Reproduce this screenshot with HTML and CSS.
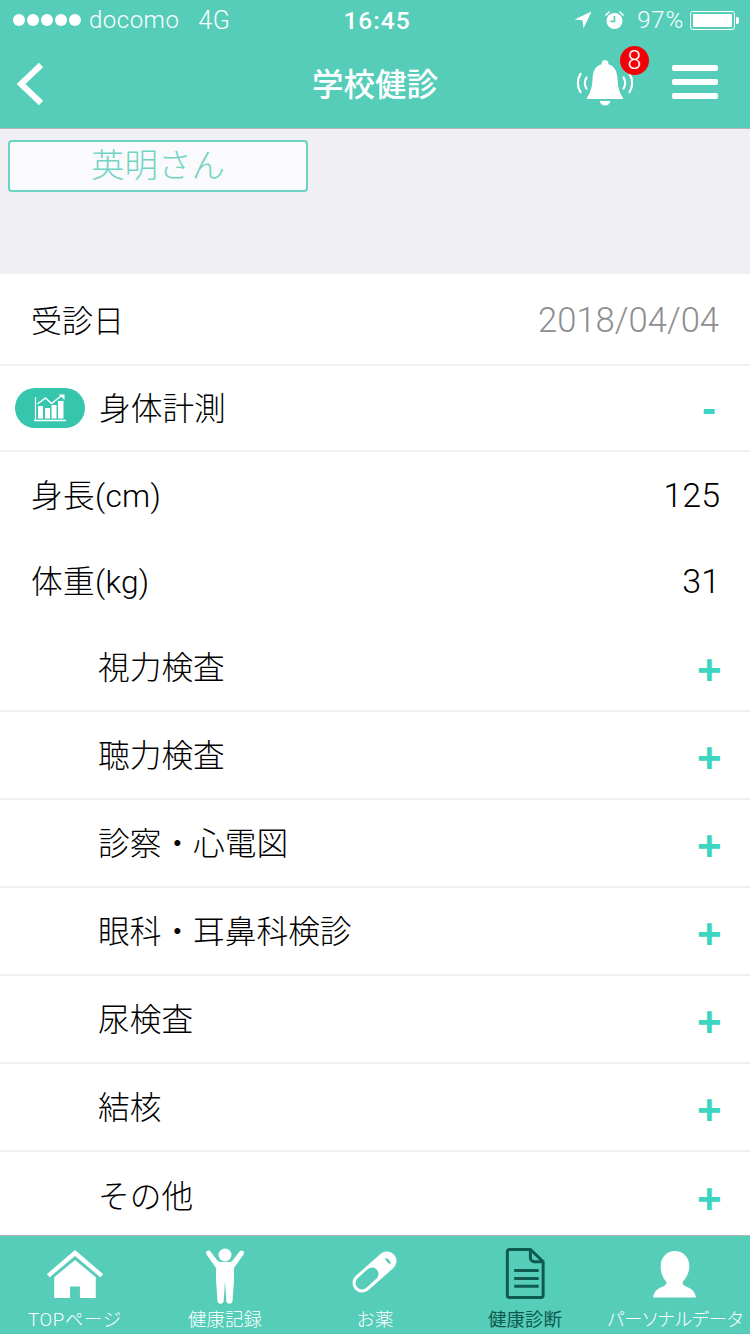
FILE: index.html
```html
<!DOCTYPE html>
<html lang="ja">
<head>
<meta charset="utf-8">
<title>学校健診</title>
<link rel="stylesheet" href="styles.css">
</head>
<body>
<div class="app">
  <header class="top">
    <div class="status">
      <div class="status-left">
        <div class="dots"><i></i><i></i><i></i><i></i><i></i></div>
        <span class="carrier">docomo</span>
        <span class="net">4G</span>
      </div>
      <div class="clock">16:45</div>
      <div class="status-right">
        <svg class="ico-loc" width="18" height="18" viewBox="0 0 18 18"><path d="M17.500.5 .5 8.500l8 .8 1 8.200z" fill="#fff"/></svg>
        <svg class="ico-alarm" width="21" height="20" viewBox="0 0 21 20"><circle cx="10.500" cy="11" r="8" fill="#fff"/><path d="M10.500 6v5.400H6.500" fill="none" stroke="#55cdb9" stroke-width="1.600"/><path d="M1.500 5.500 5.500 1.500M19.500 5.500l-4-4" stroke="#fff" stroke-width="1.600"/></svg>
        <span class="pct">97%</span>
        <div class="battery"><div class="battery-fill"></div></div>
        <div class="battery-tip"></div>
      </div>
    </div>
    <nav class="nav">
      <svg class="back" width="28" height="44" viewBox="0 0 28 44"><path d="M25 3 5 22l20 19" fill="none" stroke="#fff" stroke-width="6"/></svg>
      <h1 class="title">学校健診</h1>
      <div class="bell">
        <svg width="60" height="48" viewBox="0 0 60 48"><path d="M30 1a3.400 3.400 0 0 1 3.300 4.200C40 7 42 12.500 42.500 20c.5 8 1.500 13 5.500 18.500V40H12v-1.500C16 33 17 28 17.500 20 18 12.500 20 7 26.700 5.200A3.400 3.400 0 0 1 30 1z" fill="#fff"/><path d="M24.500 42h11c-.8 3-3 4.500-5.500 4.500s-4.700-1.500-5.500-4.500z" fill="#fff"/><path d="M5.500 15c-3.500 5-3.500 13 0 18M11.500 18.500c-2 3.500-2 8 0 11M54.500 15c3.500 5 3.500 13 0 18M48.500 18.500c2 3.500 2 8 0 11" fill="none" stroke="#fff" stroke-width="2.200" stroke-linecap="round"/></svg>
        <span class="badge">8</span>
      </div>
      <div class="burger"><i></i><i></i><i></i></div>
    </nav>
  </header>

  <section class="band">
    <button class="person">英明さん</button>
  </section>

  <main class="list">
    <div class="row row-date"><span class="day">受診日</span><span class="date">2018/04/04</span></div>
    <div class="row row-head">
      <span class="pill">
        <svg width="34" height="28" viewBox="0 0 34 28"><path d="M1 26.500h32" stroke="#fff" stroke-width="1.500"/><path d="M2.500 3v23" stroke="#fff" stroke-width="1.200"/><path d="M5 12h5v12.500H5zM12 14h5v10.500h-5zM18.500 11h5v13.500h-5zM25 7h5.500v17.500H25z" fill="#fff"/><path d="M4.500 10l8-6 6 5.500L28 2" fill="none" stroke="#fff" stroke-width="1.500"/><path d="M25.500 .5h6v5.500z" fill="#fff"/></svg>
      </span>
      <span class="label">身体計測</span>
      <span class="sign">-</span>
    </div>
    <div class="row row-plain"><span class="metric">身長(cm)</span><span class="value">125</span></div>
    <div class="row row-plain"><span class="metric">体重(kg)</span><span class="value">31</span></div>
    <div class="row row-item"><span class="label">視力検査</span><span class="sign">+</span></div>
    <div class="row row-item"><span class="label">聴力検査</span><span class="sign">+</span></div>
    <div class="row row-item"><span class="label">診察・心電図</span><span class="sign">+</span></div>
    <div class="row row-item"><span class="label">眼科・耳鼻科検診</span><span class="sign">+</span></div>
    <div class="row row-item"><span class="label">尿検査</span><span class="sign">+</span></div>
    <div class="row row-item"><span class="label">結核</span><span class="sign">+</span></div>
    <div class="row row-item row-last"><span class="label">その他</span><span class="sign">+</span></div>
  </main>

  <footer class="tabs">
    <div class="tab">
      <svg class="ico-home" width="58" height="48" viewBox="1.500 1 57 48.500"><path d="M1.500 25.500 30 1l28.500 24.500-3 3L30 7 4.500 28.500z" fill="#fff"/><path d="M30 11 51 28.500V49.500H35V38h-10v11.500H9V28.500z" fill="#fff"/></svg>
      <span class="top-label">TOPページ</span>
    </div>
    <div class="tab">
      <svg class="ico-body" width="40" height="56" viewBox="0 0 40 56"><circle cx="20" cy="7" r="6.500" fill="#fff"/><path d="M2 3c1.500-1 2.500-.5 3.500.5L12 12c1 1.200 2 2 4 2h8c2 0 3-.8 4-2l6.500-8.500c1-1 2-1.500 3.500-.5s1.200 2.500.5 3.500L29 20v12l-1.500 21c-.2 1.800-1.200 2.800-3 2.800s-3-1-3.200-2.800L20 33l-1.300 20c-.2 1.800-1.400 2.800-3.200 2.800s-2.800-1-3-2.800L11 32V20L1.500 6.500C.8 5.500.5 4 2 3z" fill="#fff"/></svg>
      <span>健康記録</span>
    </div>
    <div class="tab">
      <svg class="ico-pill" width="46" height="44" viewBox="0 0 46 44"><path d="M10 32 35 10" fill="none" stroke="#fff" stroke-width="19" stroke-linecap="round"/><path d="M10 32 20 23" fill="none" stroke="#55cdb9" stroke-width="13" stroke-linecap="round"/><path d="M33 7c3 0 5 2 6 6-3 0-5-3-6-6z" fill="#55cdb9"/></svg>
      <span>お薬</span>
    </div>
    <div class="tab tab-active">
      <svg class="ico-doc" width="40" height="51" viewBox="0 0 40 52"><path d="M4 1.500h21.500L38.500 14v34.500a2 2 0 0 1-2 2H4a2 2 0 0 1-2-2v-45a2 2 0 0 1 2-2z" fill="none" stroke="#0e5a4f" stroke-width="3"/><path d="M25.500 1.500V10a4 4 0 0 0 4 4h9" fill="none" stroke="#0e5a4f" stroke-width="3"/><path d="M9 23h25M9 31h25M9 39h25" stroke="#0e5a4f" stroke-width="3"/></svg>
      <span>健康診断</span>
    </div>
    <div class="tab">
      <svg class="ico-user" width="44" height="48" viewBox="0 0 46 50"><path d="M23 1c9 0 15 7 15 16 0 6-3 12-6.500 15.500-1.500 2 0 4 3 5.500 5 2 9 4 10.500 11.500H0C1.500 42 5.500 40 10.500 38c3-1.500 4.500-3.500 3-5.500C10 29 8 23 8 17 8 8 14 1 23 1z" fill="#fff"/></svg>
      <span class="wide">パーソナルデータ</span>
    </div>
  </footer>
</div>
</body>
</html>
```

FILE: styles.css
```css
* { box-sizing: border-box; }
html, body { margin: 0; padding: 0; }
body {
  width: 750px;
  height: 1334px;
  overflow: hidden;
  background: #fff;
  font-family: Roboto, "Noto Sans CJK JP", sans-serif;
  color: #000;
}
.app { display: flex; flex-direction: column; height: 1334px; }

.top { background: #55cdb9; height: 129px; border-bottom: 1px solid #b5b5b5; color: #fff; flex: none; }
.status {
  height: 40px;
  display: grid;
  grid-template-columns: 1fr auto 1fr;
  align-items: center;
  font-family: Roboto, sans-serif;
  font-size: 24px;
  font-weight: 300;
}
.status-left { display: flex; align-items: center; padding-left: 13px; }
.dots { display: flex; gap: 2px; margin-right: 8px; }
.dots i { width: 12px; height: 12px; border-radius: 50%; background: #fff; display: block; }
.carrier { letter-spacing: .5px; }
.net { margin-left: 19px; font-size: 25px; letter-spacing: .5px; }
.clock { font-size: 24.500px; font-weight: 500; letter-spacing: 1px; margin-left: 4px; }
.status-right { display: flex; align-items: center; justify-content: flex-end; padding-right: 11px; }
.ico-loc { margin-right: 12px; }
.ico-alarm { margin-right: 12px; }
.pct { margin-right: 6px; letter-spacing: .8px; }
.battery { width: 45px; height: 19px; border: 1px solid #fff; border-radius: 3px; padding: 2px; }
.battery-fill { height: 100%; background: #fff; border-radius: 1px; }
.battery-tip { width: 3px; height: 7px; background: #fff; border-radius: 0 2px 2px 0; margin-left: 1px; }

.nav { height: 88px; position: relative; display: flex; align-items: center; justify-content: center; padding-bottom: 2px; }
.back { position: absolute; left: 16px; top: 22px; }
.title { margin: 0; font-family: "Noto Sans CJK JP", sans-serif; font-size: 31.500px; font-weight: 500; line-height: 1; }
.bell { position: absolute; left: 575px; top: 19px; width: 76px; height: 50px; }
.bell svg { position: absolute; left: 0; top: 0; }
.badge {
  position: absolute;
  left: 45px;
  top: -13px;
  width: 29px;
  height: 29px;
  border-radius: 50%;
  background: #f40009;
  color: #fff;
  font-family: Roboto, sans-serif;
  font-size: 25px;
  font-weight: 300;
  line-height: 29px;
  text-align: center;
}
.burger { position: absolute; left: 672px; top: 25px; width: 46px; display: flex; flex-direction: column; gap: 8px; }
.burger i { display: block; height: 6px; background: #fff; border-radius: 2px; }

.band { height: 145px; background: #efeff4; padding: 11px 8px 0; flex: none; }
.person {
  display: block;
  width: 300px;
  height: 52px;
  padding: 0 0 6px;
  background: #fafafc;
  border: 2px solid #6bd3c2;
  border-radius: 4px;
  color: #72d5c4;
  font-family: "Noto Sans CJK JP", sans-serif;
  font-weight: 300;
  font-size: 33.500px;
  line-height: 40px;
}

.list { flex: 1; overflow: hidden; }
.row {
  display: flex;
  align-items: center;
  font-size: 31.700px;
  font-weight: 300;
  border-bottom: 2px solid #efeff4;
  padding-bottom: 4px;
}
.row-date { height: 92px; padding-left: 31px; padding-right: 31px; padding-bottom: 2px; justify-content: space-between; }
.day { font-size: 31px; }
.date { color: #8e8e93; font-family: Roboto, sans-serif; font-size: 34.600px; font-weight: 350; padding-top: 4px; }
.row-head { height: 86px; padding-left: 15px; padding-right: 29px; }
.row-head .sign { top: 3px; }
.pill {
  width: 70px;
  height: 40px;
  border-radius: 20px;
  background: #36c6ae;
  display: flex;
  align-items: center;
  justify-content: center;
  margin-right: 14px;
  margin-top: 4px;
}
.label { flex: 1; }
.metric { letter-spacing: .3px; }
.sign { color: #3dd4c0; font-family: "Liberation Sans", sans-serif; font-weight: 700; font-size: 42px; line-height: 1; width: 24px; text-align: center; position: relative; top: 5px; }
.row-plain { height: 86px; padding-left: 31px; padding-right: 30px; justify-content: space-between; border-bottom: 0; }
.value { font-family: Roboto, sans-serif; font-size: 34px; font-weight: 350; color: #000; padding-top: 4px; }
.row-item { height: 88px; padding-left: 98px; padding-right: 29px; }
.row-last { border-bottom: 0; }

.tabs {
  height: 99px;
  flex: none;
  background: #55cdb9;
  border-top: 1px solid #b5b5b5;
  display: grid;
  grid-template-columns: repeat(5, 150px);
  color: #fff;
}
.tab { display: flex; flex-direction: column; align-items: center; height: 98px; padding-bottom: 2px; }
.tab svg { display: block; flex: none; }
.ico-home { margin-top: 14px; }
.ico-body { margin-top: 12px; }
.ico-pill { margin-top: 15px; }
.ico-doc { margin-top: 12px; }
.ico-user { margin-top: 14px; }
.tab span { margin-top: auto; font-size: 18.500px; line-height: 24px; white-space: nowrap; font-weight: 300; }
.tab .top-label { letter-spacing: .7px; }
.tab .wide { font-feature-settings: "palt" 1; font-size: 18.200px; }
.tab-active { color: #0e5a4f; }
.tab-active span { font-weight: 400; }
```
